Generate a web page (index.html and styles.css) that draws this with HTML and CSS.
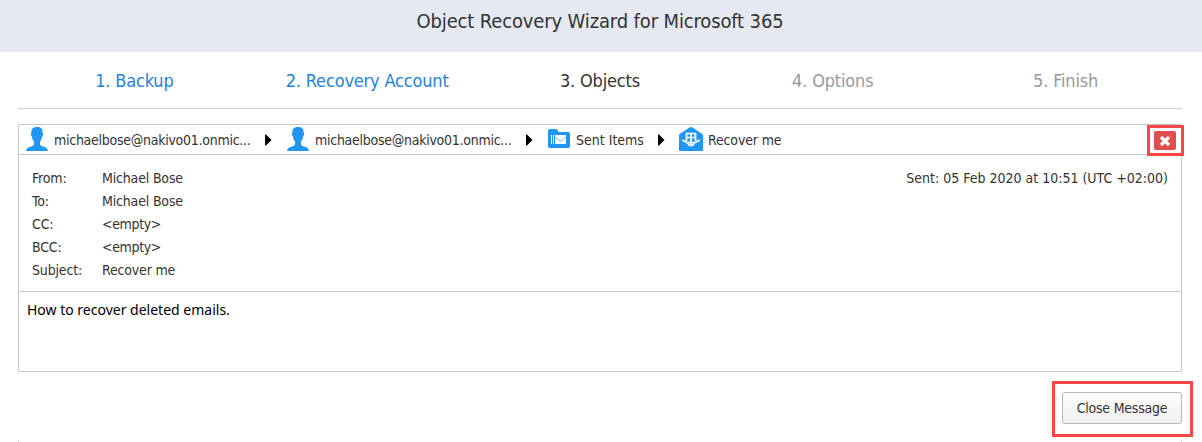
FILE: index.html
```html
<!DOCTYPE html>
<html lang="en">
<head>
<meta charset="utf-8">
<title>Object Recovery Wizard for Microsoft 365</title>
<link rel="stylesheet" href="styles.css">
</head>
<body>
<header class="titlebar"><h1 class="title">Object Recovery Wizard for Microsoft 365</h1></header>
<main class="content">
  <nav class="steps">
    <a class="step step-done">1. Backup</a>
    <a class="step step-done">2. Recovery Account</a>
    <a class="step step-current">3. Objects</a>
    <a class="step">4. Options</a>
    <a class="step">5. Finish</a>
  </nav>
  <section class="message">
    <div class="path">
      <div class="crumb crumb-user">
        <svg class="icon" width="22" height="24" viewBox="0 0 22 24"><path fill="#2196f3" d="M11 0C7.300 0 5.200 1.800 5.400 5.500c-.9 1-.4 3.500.5 4.100.3 2.300 1 3.900 2.100 5v2.400c0 1.200-1 1.900-2.800 2.500C2 20.500.6 21 0 24h22c-.6-3-2-3.500-5.200-4.500-1.800-.6-2.800-1.300-2.800-2.500v-2.400c1.100-1.100 1.800-2.700 2.100-5 .9-.6 1.400-3.100.5-4.100C16.800 1.800 14.700 0 11 0z"/></svg>
        <span class="mail">michaelbose@nakivo01.onmic...</span>
        <svg class="arrow" width="7" height="12" viewBox="0 0 7 12"><path d="M0 0.500h1L6.500 6 1 11.500H0z"/></svg>
      </div>
      <div class="crumb crumb-user">
        <svg class="icon" width="22" height="24" viewBox="0 0 22 24"><path fill="#2196f3" d="M11 0C7.300 0 5.200 1.800 5.400 5.500c-.9 1-.4 3.500.5 4.100.3 2.300 1 3.900 2.100 5v2.400c0 1.200-1 1.900-2.800 2.500C2 20.500.6 21 0 24h22c-.6-3-2-3.500-5.200-4.500-1.800-.6-2.800-1.300-2.800-2.500v-2.400c1.100-1.100 1.800-2.700 2.100-5 .9-.6 1.400-3.100.5-4.100C16.800 1.800 14.700 0 11 0z"/></svg>
        <span class="mail">michaelbose@nakivo01.onmic...</span>
        <svg class="arrow" width="7" height="12" viewBox="0 0 7 12"><path d="M0 0.500h1L6.500 6 1 11.500H0z"/></svg>
      </div>
      <div class="crumb crumb-folder">
        <svg class="icon" width="22" height="19" viewBox="0 0 22 19"><path fill="#2196f3" d="M0 2Q0 0 2 0h6q1.500 0 2 2l.5 1H20q2 0 2 2v12q0 2-2 2H2q-2 0-2-2z"/><path fill="#fff" d="M7 6h11v9H7zM3 6h1v9H3zM5 6h1v9H5z"/><path fill="none" stroke="#7fc2f8" stroke-width="1" d="M7 8l4 3.400q1.500 1 3 0L18 8"/></svg>
        <span>Sent Items</span>
        <svg class="arrow" width="7" height="12" viewBox="0 0 7 12"><path d="M0 0.500h1L6.500 6 1 11.500H0z"/></svg>
      </div>
      <div class="crumb crumb-mail">
        <svg class="icon" width="24" height="24" viewBox="0 0 24 24"><path fill="#2196f3" d="M0 8.500Q0 7.500 1 6.800L10.500.6q1.500-1 3 0L23 6.800q1 .7 1 1.700V23q0 1-1 1H1q-1 0-1-1z"/><path fill="none" stroke="#fff" stroke-width="1.700" d="M7.500 14V6.500h9V14M12 6.500V18M7.500 10.500h9M3.300 13l4.400 2.500h8.600l4.400-2.500M8 15.500l2.500 3h3l2.500-3"/></svg>
        <span class="recover">Recover me</span>
      </div>
      <div class="close-mark"><button class="close" aria-label="Close"><svg width="12" height="12" viewBox="0 0 12 12"><path fill="none" stroke="#fff" stroke-width="3.200" d="M2 2l8 8M10 2l-8 8"/></svg></button></div>
    </div>
    <div class="details">
      <dl class="fields">
        <dt>From:</dt><dd>Michael Bose</dd>
        <dt>To:</dt><dd>Michael Bose</dd>
        <dt>CC:</dt><dd class="empty">&lt;empty&gt;</dd>
        <dt>BCC:</dt><dd class="empty">&lt;empty&gt;</dd>
        <dt>Subject:</dt><dd>Recover me</dd>
      </dl>
      <div class="sent">Sent: 05 Feb 2020 at 10:51 (UTC +02:00)</div>
    </div>
    <div class="body">How to recover deleted emails.</div>
  </section>
  <footer class="footer"><div class="button-mark"><button class="button">Close Message</button></div></footer>
  <div class="edge"></div>
</main>
</body>
</html>
```
FILE: styles.css
```css
* { box-sizing: border-box; }
body { margin: 0; background: #fff; color: #333; font: 14px/23px "DejaVu Sans Condensed", "DejaVu Sans", sans-serif; font-stretch: condensed; height: 442px; overflow: hidden; white-space: nowrap; }
.titlebar { height: 52px; background: #e6e9f2; text-align: center; padding-top: 6px; }
.title { margin: 0; font-size: 20px; line-height: 30px; font-weight: 400; letter-spacing: -0.14px; padding-right: 2px; }
.content { padding: 0 20px 0 18px; }
.steps { display: grid; grid-template-columns: repeat(5, 1fr); height: 57px; border-bottom: 1px solid #ccc; font-size: 18px; line-height: 58px; text-align: center; letter-spacing: -0.17px; }
.step { color: #999; }
.step-done { color: #1e82dc; }
.step-current { color: #333; }
.message { margin-top: 15px; border: 1px solid #c8c8c8; height: 248px; display: flex; flex-direction: column; }
.path { display: flex; height: 30px; border-bottom: 1px solid #c8c8c8; padding-left: 7px; }
.crumb { display: flex; align-items: center; height: 29px; }
.crumb .icon, .arrow { flex: none; }
.crumb .icon { margin-bottom: 1px; }
.crumb-folder .icon { margin-bottom: 2px; }
.crumb span { flex: none; padding: 1px 0 0 6px; }
.crumb .mail { letter-spacing: -0.27px; }
.crumb-user { width: 261px; }
.crumb-user .arrow { margin: 0 15px 0 auto; }
.crumb-folder { width: 131px; }
.crumb-folder .arrow { margin: 0 14px 0 auto; }
.crumb .recover { padding-left: 5px; letter-spacing: -0.15px; }
.close-mark { margin: 0 -3px 0 auto; width: 37px; height: 31px; border: 3px solid #fa4646; padding-left: 4px; display: flex; align-items: center; z-index: 1; }
.close { width: 22px; height: 19px; border: 0; border-radius: 2px; background: #e04e4e; padding: 0; display: flex; align-items: center; justify-content: center; }
.details { display: flex; justify-content: space-between; height: 137px; border-bottom: 1px solid #c8c8c8; padding: 12px 13px 0; }
.fields { display: grid; grid-template-columns: 70px auto; grid-auto-rows: 23px; margin: 0; letter-spacing: -0.17px; }
.fields dd { margin: 0; }
.fields .empty { letter-spacing: -0.35px; }
.body { padding: 6px 8px; color: #000; font-family: "Noto Sans", sans-serif; }
.footer { display: flex; justify-content: flex-end; margin: 9px -11px 0 0; }
.button-mark { width: 141px; height: 56px; border: 3px solid #fa4646; padding: 8px 7px; }
.button { display: block; width: 120px; height: 32px; border: 1px solid #b9b9b9; border-radius: 3px; background: linear-gradient(#fff, #efefef); color: #333; font: inherit; letter-spacing: -0.23px; padding: 0; white-space: nowrap; }
.edge { height: 1px; margin-top: 4px; border: solid #c8c8c8; border-width: 0 1px; }
```
